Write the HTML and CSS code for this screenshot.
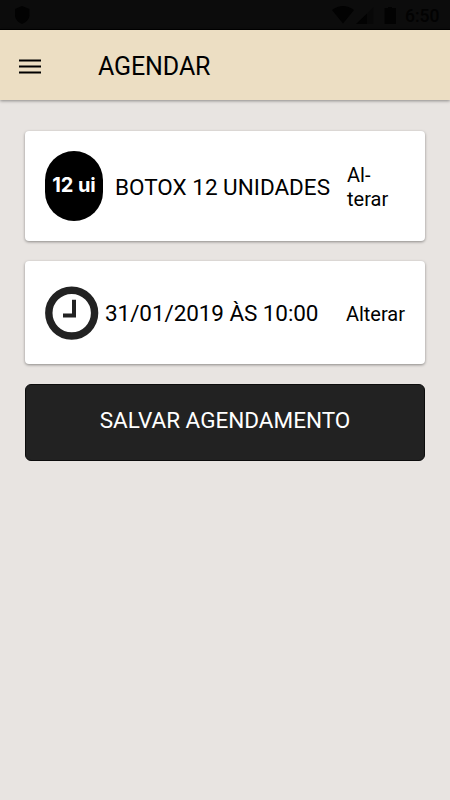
FILE: index.html
```html
<!DOCTYPE html>
<html lang="pt-BR">
  <head>
    <meta charset="utf-8">
    <meta name="viewport" content="width=device-width">
    <title>Agendar</title>
    <link rel="stylesheet" href="styles.css">
  </head>
  <body>
    <div class="statusbar">
      <svg class="shield" width="16" height="18" viewBox="0 0 16 18"><path d="M8 0 L15.500 3 V9 C15.500 13 12 16.500 8 18 C4 16.500 1 13 1 9 V3 Z"/></svg>
      <div class="status-right">
        <svg width="66" height="20" viewBox="0 0 66 20">
          <path d="M0 4 Q11 -4 22 4 L11 17.500 Z"/>
          <path d="M24 18 L35 7.500 V18 Z"/>
          <path class="faint" d="M35 7.500 L41.500 1 V18 H35 Z"/>
          <path d="M52.500 2 H56 V1 H60 V2 H64 V18 H52.500 Z"/>
        </svg>
        <span class="clock">6:50</span>
      </div>
    </div>
    <header class="toolbar">
      <svg class="menu" width="24" height="16" viewBox="0 0 24 16"><path d="M1 0.500h22v2H1zM1 6.500h22v2H1zM1 12.500h22v2H1z"/></svg>
      <h1>AGENDAR</h1>
    </header>
    <main class="content">
      <section class="card card-service">
        <span class="avatar">12 ui</span>
        <span class="label">BOTOX 12 UNIDADES</span>
        <a class="change">Al-<br>terar</a>
      </section>
      <section class="card card-date">
        <svg class="time" width="54" height="54" viewBox="0 0 54 54">
          <circle cx="26.700" cy="27.100" r="22.900"/>
          <path d="M29 13.800 V29.600 H18"/>
        </svg>
        <span class="label">31/01/2019 ÀS 10:00</span>
        <a class="change">Alterar</a>
      </section>
      <button class="save" type="button">SALVAR AGENDAMENTO</button>
    </main>
  </body>
</html>
```

FILE: styles.css
```css
* {margin: 0; padding: 0; box-sizing: border-box;}

body {
	background: #e8e4e1;
	color: #000;
	font-family: Roboto, Arial, sans-serif;
	min-height: 100vh;
}

/* status bar */
.statusbar {
	display: flex;
	justify-content: space-between;
	height: 30px;
	padding: 6px 10px 0 14px;
	background: #0c0c0c;
	border-bottom: 1px solid #000;
}
.statusbar svg {fill: #020202;}
.statusbar .faint {fill: #080808;}
.status-right {display: flex;}
.clock {
	margin-left: 7px;
	width: 35px;
	font-size: 17.5px;
	line-height: 20px;
	font-weight: 500;
	white-space: nowrap;
	color: #020202;
}

/* header */
.toolbar {
	display: flex;
	align-items: center;
	height: 70px;
	padding: 3px 18px 0;
	background: #ecdec3;
	box-shadow: 0 1px 3px rgba(0,0,0,0.4);
}
.toolbar h1 {
	margin-left: 56px;
	font-size: 25px;
	font-weight: 400;
	line-height: 30px;
	letter-spacing: -0.1px;
}

/* cards */
.content {padding: 31px 25px 0;}
.card {
	display: flex;
	align-items: center;
	padding: 0 20px;
	background: #fff;
	border-radius: 4px;
	box-shadow: 0 1px 3px rgba(0,0,0,0.4);
}
.card-service {height: 110px; margin-bottom: 20px;}
.card-date {height: 103px; margin-bottom: 20px;}
.avatar {
	width: 58px;
	height: 70px;
	border-radius: 29px;
	background: #000;
	color: #fff;
	font: 700 20px/69px Inter, Roboto, sans-serif;
	letter-spacing: -0.1px;
	text-align: center;
	white-space: nowrap;
}
.label {
	font-size: 22.5px;
	line-height: 28px;
	white-space: nowrap;
}
.card-service .label {margin: 1px 0 0 12px;}
.card-date .label {margin: 1px 0 0 6px; letter-spacing: -0.08px;}
.change {
	font-size: 20px;
	line-height: 24px;
	white-space: nowrap;
}
.card-service .change {margin: 2px 0 0 17px;}
.card-date .change {margin: 2px 0 0 auto;}
.time {
	fill: none;
	stroke: #222;
	stroke-width: 7.4px;
}
.time path {stroke-width: 4px;}

.save {
	display: block;
	width: 100%;
	height: 77px;
	padding-bottom: 5px;
	border: 1px solid #0c0c0c;
	border-radius: 6px;
	background: #222;
	color: #fff;
	font: 400 22.5px/28px Roboto, Arial, sans-serif;
}
```
